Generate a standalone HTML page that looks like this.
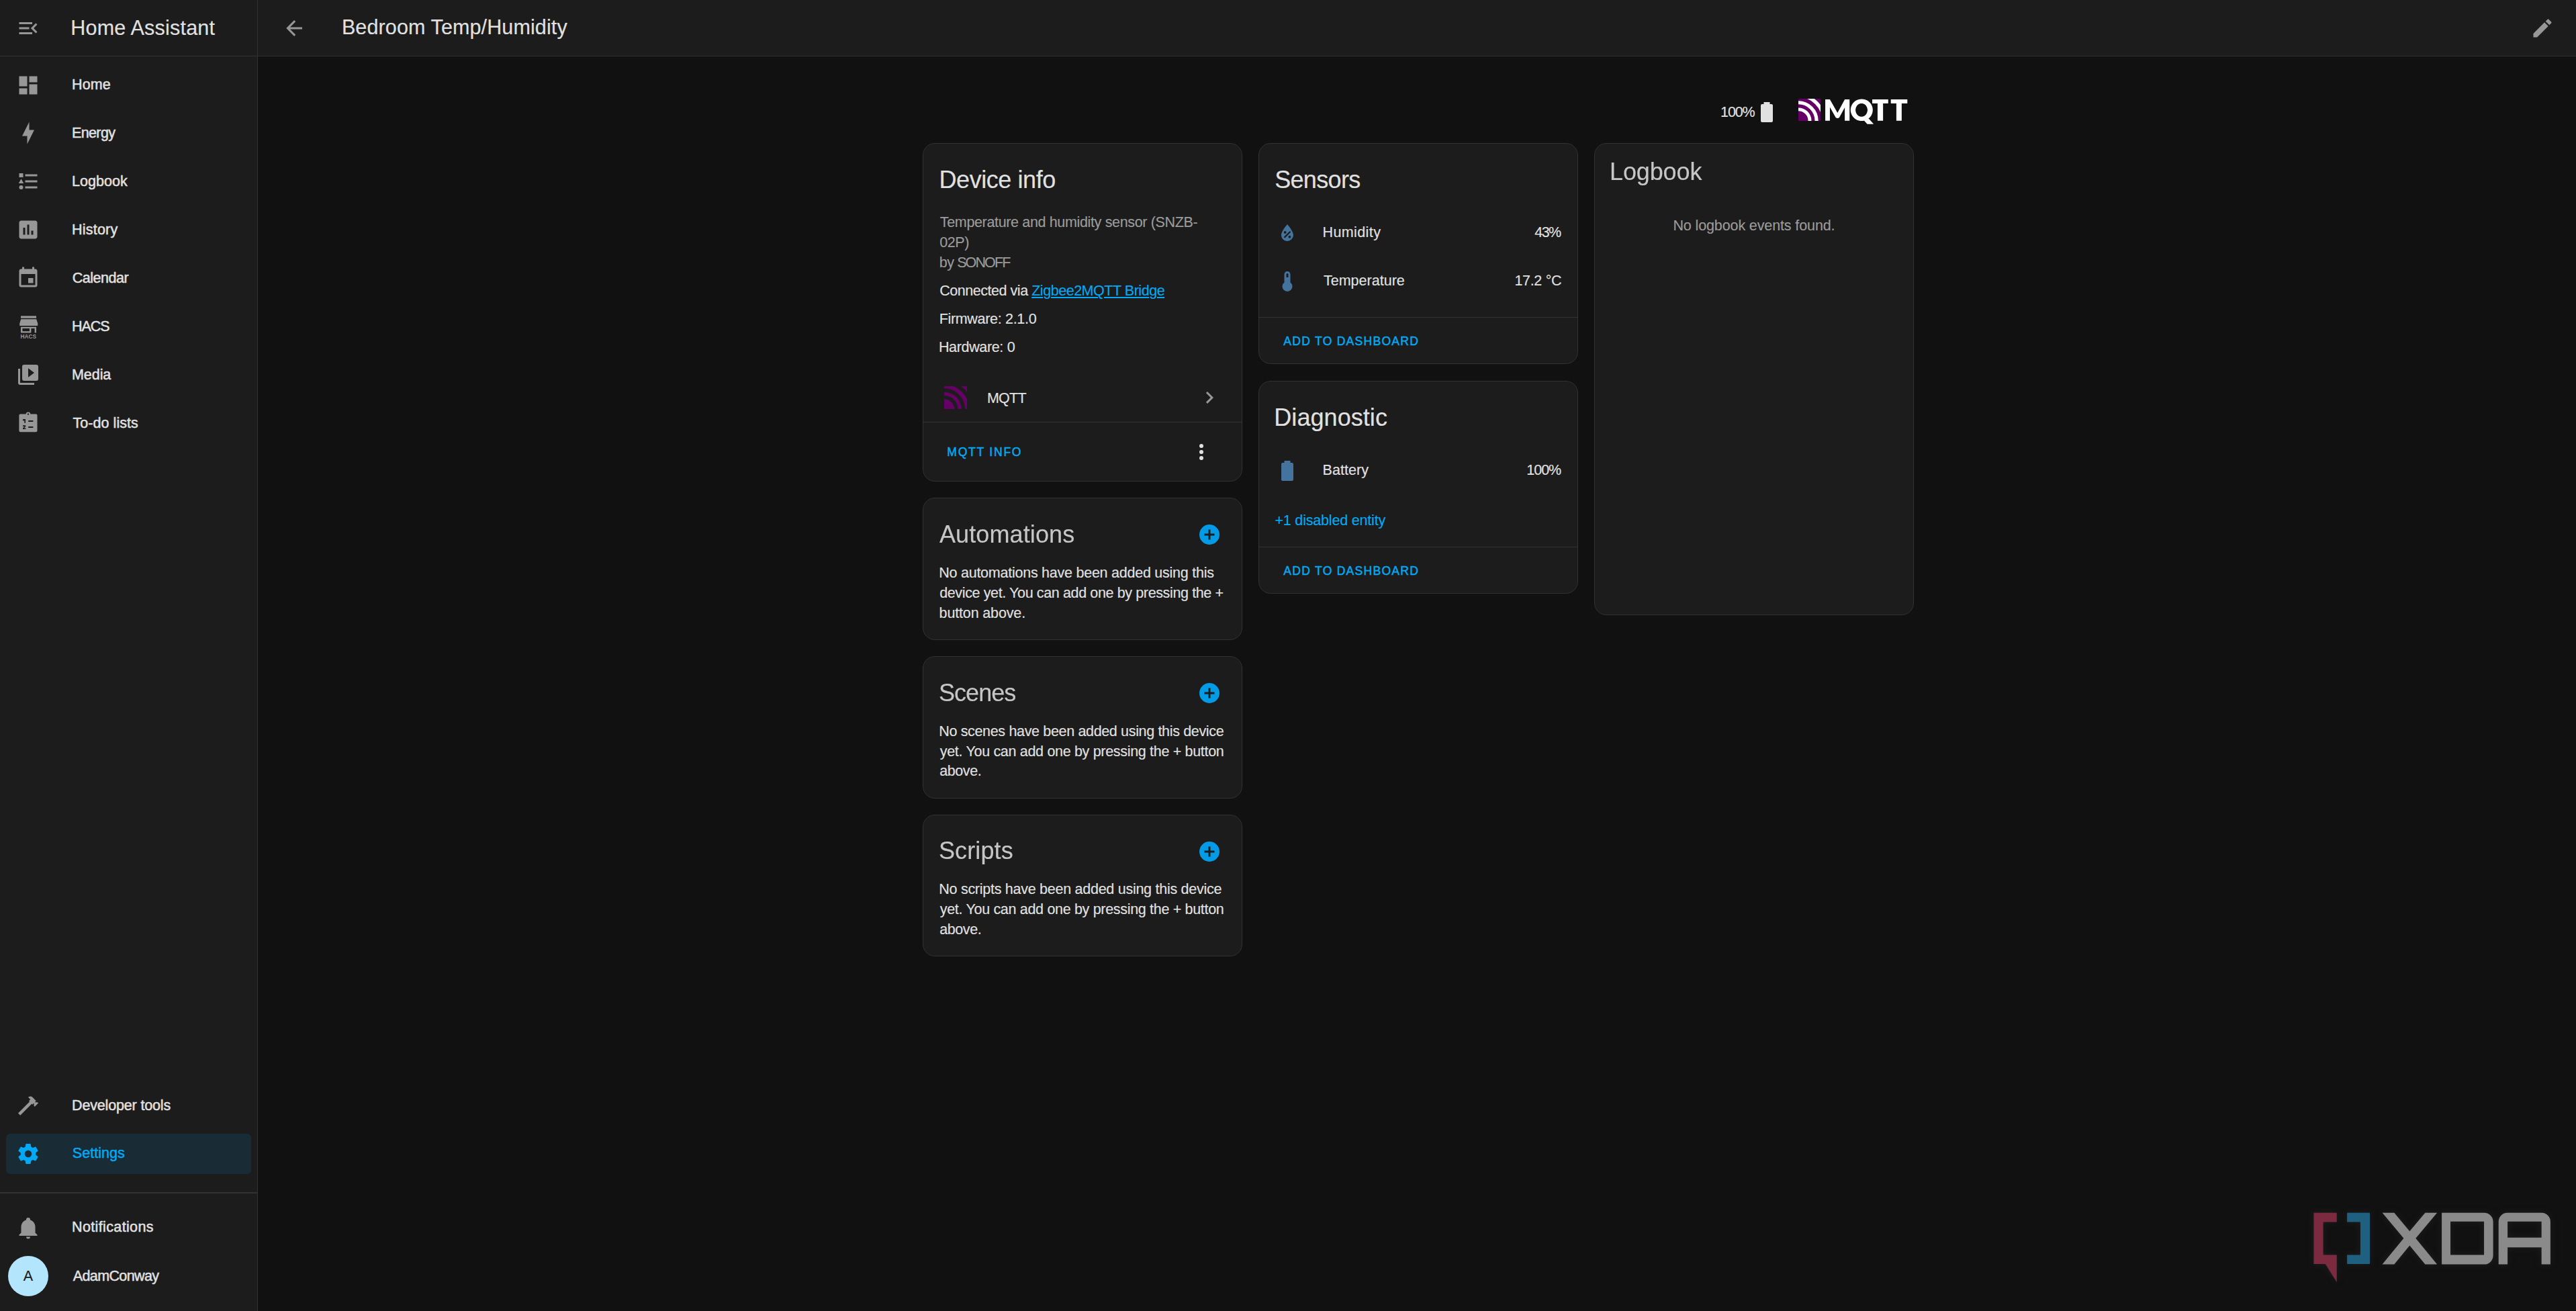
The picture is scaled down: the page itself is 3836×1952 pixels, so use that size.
<!DOCTYPE html>
<html><head><meta charset="utf-8"><style>
html,body{margin:0;padding:0;}
body{width:3836px;height:1952px;background:#111111;position:relative;overflow:hidden;font-family:"Liberation Sans",sans-serif;}
.t{position:absolute;white-space:nowrap;line-height:1;}
.med{-webkit-text-stroke:0.5px currentColor;}
.t{-webkit-text-stroke:0.15px currentColor;}
.t.med{-webkit-text-stroke:0.5px currentColor;}
</style></head><body>
<div style="position:absolute;left:0px;top:0px;width:383px;height:1952px;background:#1c1c1c;"></div>
<div style="position:absolute;left:383px;top:0px;width:1px;height:1952px;background:#323232;"></div>
<div style="position:absolute;left:384px;top:0px;width:3452px;height:83px;background:#1c1c1c;"></div>
<div style="position:absolute;left:0px;top:83px;width:3836px;height:1px;background:#323232;"></div>
<div style="position:absolute;left:0px;top:1775px;width:383px;height:1.5px;background:#323232;"></div>
<svg style="position:absolute;left:23.6px;top:24px" width="36" height="36" viewBox="0 0 24 24"><path fill="#979797" d="M21,15.61L19.59,17L14.58,12L19.59,7L21,8.39L17.44,12L21,15.61M3,6H16V8H3V6M3,13V11H13V13H3M3,18V16H16V18H3Z"/></svg>
<div class="t " style="left:105.25px;top:26.00px;font-size:30.5px;color:#e1e1e1;letter-spacing:0.222px;">Home Assistant</div>
<svg style="position:absolute;left:420px;top:24px" width="36" height="36" viewBox="0 0 24 24"><path fill="#979797" d="M20,11V13H8L13.5,18.5L12.08,19.92L4.16,12L12.08,4.08L13.5,5.5L8,11H20Z"/></svg>
<div class="t " style="left:508.90px;top:25.00px;font-size:30.5px;color:#e1e1e1;letter-spacing:0.122px;">Bedroom Temp/Humidity</div>
<svg style="position:absolute;left:3767.5px;top:24px" width="36" height="36" viewBox="0 0 24 24"><path fill="#979797" d="M20.71,7.04C21.1,6.65 21.1,6 20.71,5.63L18.37,3.29C18,2.9 17.35,2.9 16.96,3.29L15.12,5.12L18.87,8.87M3,17.25V21H6.75L17.81,9.93L14.06,6.18L3,17.25Z"/></svg>
<div class="t med" style="left:107.02px;top:116.00px;font-size:21.5px;color:#e1e1e1;letter-spacing:0.121px;">Home</div>
<svg style="position:absolute;left:24px;top:109px" width="36" height="36" viewBox="0 0 24 24"><path fill="#979797" d="M13,3V9H21V3M13,21H21V11H13M3,21H11V15H3M3,13H11V3H3V13Z"/></svg>
<div class="t med" style="left:107.02px;top:188.00px;font-size:21.5px;color:#e1e1e1;letter-spacing:-0.637px;">Energy</div>
<svg style="position:absolute;left:24px;top:180px" width="36" height="36" viewBox="0 0 24 24"><path fill="#979797" d="M11 15H6L13 1V9H18L11 23V15Z"/></svg>
<div class="t med" style="left:107.02px;top:260.00px;font-size:21.5px;color:#e1e1e1;letter-spacing:0.052px;">Logbook</div>
<svg style="position:absolute;left:24px;top:252px" width="36" height="36" viewBox="0 0 24 24"><path fill="#979797" d="M5,9.5L7.5,14H2.5L5,9.5M3,4H7V8H3V4M5,20A2,2 0 0,0 7,18A2,2 0 0,0 5,16A2,2 0 0,0 3,18A2,2 0 0,0 5,20M9,5V7H21V5H9M9,19H21V17H9V19M9,13H21V11H9V13Z"/></svg>
<div class="t med" style="left:107.02px;top:332.00px;font-size:21.5px;color:#e1e1e1;letter-spacing:0.213px;">History</div>
<svg style="position:absolute;left:24px;top:324px" width="36" height="36" viewBox="0 0 24 24"><path fill="#979797" d="M19 3H5C3.9 3 3 3.9 3 5V19C3 20.1 3.9 21 5 21H19C20.1 21 21 20.1 21 19V5C21 3.9 20.1 3 19 3M9 17H7V10H9V17M13 17H11V7H13V17M17 17H15V13H17V17Z"/></svg>
<div class="t med" style="left:107.70px;top:404.00px;font-size:21.5px;color:#e1e1e1;letter-spacing:-0.481px;">Calendar</div>
<svg style="position:absolute;left:24px;top:396px" width="36" height="36" viewBox="0 0 24 24"><path fill="#979797" d="M19,19H5V8H19M16,1V3H8V1H6V3H5C3.89,3 3,3.89 3,5V19A2,2 0 0,0 5,21H19A2,2 0 0,0 21,19V5C21,3.89 20.1,3 19,3H18V1M17,12H12V17H17V12Z"/></svg>
<div class="t med" style="left:107.02px;top:476.00px;font-size:21.5px;color:#e1e1e1;letter-spacing:-1.024px;">HACS</div>
<div class="t med" style="left:107.02px;top:548.00px;font-size:21.5px;color:#e1e1e1;letter-spacing:-0.065px;">Media</div>
<svg style="position:absolute;left:24px;top:540px" width="36" height="36" viewBox="0 0 24 24"><path fill="#979797" d="M4,6H2V20A2,2 0 0,0 4,22H18V20H4V6M22,4A2,2 0 0,0 20,2H8A2,2 0 0,0 6,4V16A2,2 0 0,0 8,18H20A2,2 0 0,0 22,16V4M12,14.5V5.5L18,10L12,14.5Z"/></svg>
<div class="t med" style="left:108.44px;top:620.00px;font-size:21.5px;color:#e1e1e1;letter-spacing:0.060px;">To-do lists</div>
<svg style="position:absolute;left:24px;top:469px" width="36" height="36" viewBox="0 0 36 36">
<rect x="7" y="1.4" width="23" height="3.3" fill="#979797"/>
<path d="M7.2 6.3H30.2L32.2 12.5V15.9H5.2V12.5Z" fill="#979797"/>
<path d="M7 17.7H30V26.4H27.6V19.9H22.4V26.4H7ZM9.4 19.9V24.2H20V19.9Z" fill="#979797" fill-rule="evenodd"/>
<text x="18.3" y="35.3" font-family="Liberation Sans" font-size="8.3" font-weight="bold" text-anchor="middle" fill="#979797">HACS</text>
</svg>
<svg style="position:absolute;left:24px;top:609px" width="36" height="36" viewBox="0 0 36 36">
<path fill="#979797" d="M4.4 9.5A2 2 0 0 1 6.4 7.5H29.5A2 2 0 0 1 31.5 9.5V32.2A2 2 0 0 1 29.5 34.2H6.4A2 2 0 0 1 4.4 32.2Z"/>
<circle cx="18" cy="7.7" r="3.3" fill="#979797"/>
<circle cx="18" cy="7.6" r="1.2" fill="#1c1c1c"/>
<path fill="#1c1c1c" d="M18.2 16.9H25.4V18.9H18.2Z M18.2 26H25.4V28H18.2Z M10 15.2L12.2 15.1H14V20.8H12.3V17L10 17.6Z M10 24.3H14.2V25.9L11.9 28.4H14.4V30H10V28.5L12.4 25.9H10Z"/>
</svg>
<div style="position:absolute;left:9px;top:1688px;width:365px;height:59.5px;background:#192c36;border-radius:6px;"></div>
<svg style="position:absolute;left:23.8px;top:1628.2px" width="36" height="36" viewBox="0 0 24 24"><path fill="#979797" d="M2 19.63L13.43 8.2L12.72 7.5L14.14 6.07L12 3.89C13.2 2.7 15.09 2.7 16.27 3.89L19.87 7.5L18.45 8.91H21.29L22 9.62L18.45 13.21L17.74 12.5V9.62L16.27 11.04L15.56 10.33L4.13 21.76L2 19.63Z"/></svg>
<div class="t med" style="left:107.02px;top:1636.00px;font-size:21.5px;color:#e1e1e1;letter-spacing:-0.155px;">Developer tools</div>
<svg style="position:absolute;left:23.8px;top:1700.2px" width="36" height="36" viewBox="0 0 24 24"><path fill="#03a9f4" d="M12,15.5A3.5,3.5 0 0,1 8.5,12A3.5,3.5 0 0,1 12,8.5A3.5,3.5 0 0,1 15.5,12A3.5,3.5 0 0,1 12,15.5M19.43,12.97C19.47,12.65 19.5,12.33 19.5,12C19.5,11.67 19.47,11.34 19.43,11L21.54,9.37C21.73,9.22 21.78,8.95 21.66,8.73L19.66,5.27C19.54,5.05 19.27,4.96 19.05,5.05L16.56,6.05C16.04,5.66 15.5,5.32 14.87,5.07L14.5,2.42C14.46,2.18 14.25,2 14,2H10C9.75,2 9.54,2.18 9.5,2.42L9.13,5.07C8.5,5.32 7.96,5.66 7.440,6.05L4.95,5.05C4.73,4.96 4.46,5.05 4.34,5.27L2.34,8.73C2.21,8.95 2.27,9.22 2.46,9.37L4.57,11C4.53,11.34 4.5,11.67 4.5,12C4.5,12.330 4.53,12.65 4.57,12.97L2.46,14.63C2.27,14.78 2.21,15.05 2.34,15.27L4.34,18.73C4.46,18.95 4.73,19.03 4.95,18.95L7.44,17.94C7.96,18.34 8.5,18.68 9.13,18.93L9.5,21.58C9.54,21.82 9.75,22 10,22H14C14.25,22 14.46,21.82 14.5,21.58L14.87,18.93C15.5,18.67 16.04,18.34 16.56,17.94L19.05,18.95C19.27,19.03 19.54,18.95 19.66,18.73L21.66,15.27C21.78,15.05 21.73,14.78 21.54,14.63L19.43,12.97Z"/></svg>
<div class="t med" style="left:107.87px;top:1707.00px;font-size:21.5px;color:#03a9f4;letter-spacing:0.018px;">Settings</div>
<svg style="position:absolute;left:24px;top:1809.9px" width="36" height="36" viewBox="0 0 24 24"><path fill="#979797" d="M21,19V20H3V19L5,17V11C5,7.9 7.03,5.17 10,4.29C10,4.19 10,4.1 10,4A2,2 0 0,1 12,2A2,2 0 0,1 14,4C14,4.1 14,4.19 14,4.29C16.97,5.17 19,7.9 19,11V17L21,19M14,21A2,2 0 0,1 12,23A2,2 0 0,1 10,21"/></svg>
<div class="t med" style="left:107.02px;top:1817.00px;font-size:21.5px;color:#e1e1e1;letter-spacing:0.365px;">Notifications</div>
<div style="position:absolute;left:12px;top:1870px;width:60px;height:60px;border-radius:50%;background:#b3e5fc;"></div>
<div class="t " style="left:-358.00px;width:800px;text-align:center;top:1890.00px;font-size:21.5px;color:#1c1c1c;">A</div>
<div class="t med" style="left:108.70px;top:1890.00px;font-size:21.5px;color:#e1e1e1;letter-spacing:-0.604px;">AdamConway</div>
<div class="t " style="left:2562.12px;top:157.00px;font-size:21.5px;color:#e1e1e1;letter-spacing:-1.147px;">100%</div>
<svg style="position:absolute;left:2612.9px;top:148.7px" width="36" height="36" viewBox="0 0 24 24"><path fill="#e1e1e1" d="M16.67,4H15V2H9V4H7.33A1.33,1.33 0 0,0 6,5.33V20.67C6,21.4 6.6,22 7.33,22H16.67A1.33,1.33 0 0,0 18,20.67V5.33C18,4.6 17.4,4 16.67,4Z"/></svg>
<svg style="position:absolute;left:2678.2px;top:147.1px" width="32.9" height="32.9" viewBox="0 0 100 100">
<rect width="100" height="100" rx="1.5" fill="#660066"/>
<g fill="none" stroke="#ffffff"><circle cx="0" cy="100" r="51.7" stroke-width="15"/><circle cx="0" cy="100" r="82.5" stroke-width="15.5"/><circle cx="0" cy="100" r="115.3" stroke-width="15.6"/></g>
</svg>
<svg style="position:absolute;left:2712px;top:140px" width="136" height="52" viewBox="0 0 2576 985"><g fill="#fff">
<path d="M115 755V150H245L460 530L665 150H800V755H665V380L510 665Q460 700 410 665L245 370V755Z"/>
<path fill-rule="evenodd" d="M1142 140A312 310 0 1 1 1141.9 140Z M1137 265A170 187 0 1 0 1137.1 265Z"/>
<path d="M1205 745L1300 850H1480L1340 690Z"/>
<path d="M1440 150H1890V265H1745V755H1590V265H1440Z"/>
<path d="M1965 150H2430V265H2270V755H2120V265H1965Z"/>
</g></svg>
<div style="position:absolute;left:1374px;top:213px;width:476px;height:503.5px;background:#1c1c1c;border:1.5px solid #323232;border-radius:18px;box-sizing:border-box;"></div>
<div class="t " style="left:1398.50px;top:250.00px;font-size:36px;color:#e1e1e1;letter-spacing:-0.429px;">Device info</div>
<div class="t " style="left:1399.83px;top:321.00px;font-size:21.5px;color:#9b9b9b;letter-spacing:-0.349px;">Temperature and humidity sensor (SNZB-</div>
<div class="t " style="left:1399.14px;top:351.00px;font-size:21.5px;color:#9b9b9b;letter-spacing:-0.343px;">02P)</div>
<div class="t " style="left:1398.76px;top:381.00px;font-size:21.5px;color:#9b9b9b;letter-spacing:-0.445px;">by</div>
<div class="t " style="left:1425.17px;top:381.00px;font-size:21.5px;color:#9b9b9b;letter-spacing:-1.875px;">SONOFF</div>
<div class="t " style="left:1399.29px;top:423.00px;font-size:21.5px;color:#e1e1e1;letter-spacing:-0.466px;">Connected via <span style="color:#03a9f4;text-decoration:underline">Zigbee2MQTT Bridge</span></div>
<div class="t " style="left:1398.64px;top:465.00px;font-size:21.5px;color:#e1e1e1;letter-spacing:-0.309px;">Firmware: 2.1.0</div>
<div class="t " style="left:1397.90px;top:507.00px;font-size:21.5px;color:#e1e1e1;letter-spacing:-0.340px;">Hardware: 0</div>
<svg style="position:absolute;left:1405.7px;top:574.6px" width="34.5" height="34.5" viewBox="0 0 100 100">
<rect width="100" height="100" rx="1.5" fill="#660066"/>
<g fill="none" stroke="#1c1c1c"><circle cx="0" cy="100" r="51.7" stroke-width="15"/><circle cx="0" cy="100" r="82.5" stroke-width="15.5"/><circle cx="0" cy="100" r="115.3" stroke-width="15.6"/></g>
</svg>
<div class="t " style="left:1469.90px;top:583.00px;font-size:21.5px;color:#e1e1e1;letter-spacing:-0.754px;">MQTT</div>
<svg style="position:absolute;left:1782.8px;top:573.6px" width="36" height="36" viewBox="0 0 24 24"><path fill="#979797" d="M8.59,16.58L13.17,12L8.59,7.41L10,6L16,12L10,18L8.59,16.58Z"/></svg>
<div style="position:absolute;left:1374px;top:628px;width:476px;height:1px;background:#323232;"></div>
<div class="t med" style="left:1410.35px;top:665.00px;font-size:17.5px;color:#03a9f4;letter-spacing:1.778px;">MQTT INFO</div>
<svg style="position:absolute;left:1770.9px;top:655px" width="36" height="36" viewBox="0 0 24 24"><path fill="#e1e1e1" d="M12,16A2,2 0 0,1 14,18A2,2 0 0,1 12,20A2,2 0 0,1 10,18A2,2 0 0,1 12,16M12,10A2,2 0 0,1 14,12A2,2 0 0,1 12,14A2,2 0 0,1 10,12A2,2 0 0,1 12,10M12,4A2,2 0 0,1 14,6A2,2 0 0,1 12,8A2,2 0 0,1 10,6A2,2 0 0,1 12,4Z"/></svg>
<div style="position:absolute;left:1374px;top:741.3px;width:476px;height:211.70000000000005px;background:#1c1c1c;border:1.5px solid #323232;border-radius:18px;box-sizing:border-box;"></div>
<div class="t " style="left:1398.71px;top:778.00px;font-size:36px;color:#c6c6c6;letter-spacing:0.105px;will-change:transform;">Automations</div>
<svg style="position:absolute;left:1782.9px;top:778.3px" width="36" height="36" viewBox="0 0 24 24"><path fill="#039be5" d="M17,13H13V17H11V13H7V11H11V7H13V11H17M12,2A10,10 0 0,0 2,12A10,10 0 0,0 12,22A10,10 0 0,0 22,12A10,10 0 0,0 12,2Z"/></svg>
<div class="t " style="left:1398.25px;top:843.00px;font-size:21.5px;color:#e1e1e1;letter-spacing:-0.246px;">No automations have been added using this</div>
<div class="t " style="left:1399.19px;top:873.00px;font-size:21.5px;color:#e1e1e1;letter-spacing:-0.372px;">device yet. You can add one by pressing the +</div>
<div class="t " style="left:1398.58px;top:903.00px;font-size:21.5px;color:#e1e1e1;letter-spacing:-0.145px;">button above.</div>
<div style="position:absolute;left:1374px;top:977.2px;width:476px;height:211.70000000000005px;background:#1c1c1c;border:1.5px solid #323232;border-radius:18px;box-sizing:border-box;"></div>
<div class="t " style="left:1397.65px;top:1014.00px;font-size:36px;color:#c6c6c6;letter-spacing:-0.965px;will-change:transform;">Scenes</div>
<svg style="position:absolute;left:1782.9px;top:1014.2px" width="36" height="36" viewBox="0 0 24 24"><path fill="#039be5" d="M17,13H13V17H11V13H7V11H11V7H13V11H17M12,2A10,10 0 0,0 2,12A10,10 0 0,0 12,22A10,10 0 0,0 22,12A10,10 0 0,0 12,2Z"/></svg>
<div class="t " style="left:1398.25px;top:1079.00px;font-size:21.5px;color:#e1e1e1;letter-spacing:-0.340px;">No scenes have been added using this device</div>
<div class="t " style="left:1399.79px;top:1109.00px;font-size:21.5px;color:#e1e1e1;letter-spacing:-0.316px;">yet. You can add one by pressing the + button</div>
<div class="t " style="left:1399.18px;top:1138.00px;font-size:21.5px;color:#e1e1e1;letter-spacing:-0.416px;">above.</div>
<div style="position:absolute;left:1374px;top:1212.7px;width:476px;height:211.70000000000005px;background:#1c1c1c;border:1.5px solid #323232;border-radius:18px;box-sizing:border-box;"></div>
<div class="t " style="left:1397.65px;top:1249.00px;font-size:36px;color:#c6c6c6;letter-spacing:0.108px;will-change:transform;">Scripts</div>
<svg style="position:absolute;left:1782.9px;top:1249.7px" width="36" height="36" viewBox="0 0 24 24"><path fill="#039be5" d="M17,13H13V17H11V13H7V11H11V7H13V11H17M12,2A10,10 0 0,0 2,12A10,10 0 0,0 12,22A10,10 0 0,0 22,12A10,10 0 0,0 12,2Z"/></svg>
<div class="t " style="left:1398.25px;top:1314.00px;font-size:21.5px;color:#e1e1e1;letter-spacing:-0.268px;">No scripts have been added using this device</div>
<div class="t " style="left:1399.79px;top:1344.00px;font-size:21.5px;color:#e1e1e1;letter-spacing:-0.316px;">yet. You can add one by pressing the + button</div>
<div class="t " style="left:1399.18px;top:1374.00px;font-size:21.5px;color:#e1e1e1;letter-spacing:-0.416px;">above.</div>
<div style="position:absolute;left:1874px;top:213px;width:476px;height:329.4px;background:#1c1c1c;border:1.5px solid #323232;border-radius:18px;box-sizing:border-box;"></div>
<div class="t " style="left:1898.13px;top:250.00px;font-size:36px;color:#e1e1e1;letter-spacing:-0.652px;">Sensors</div>
<svg style="position:absolute;left:1898.8px;top:328.8px" width="36" height="36" viewBox="0 0 24 24"><path fill="#44739e" d="M12,3.25C12,3.25 6,10 6,14C6,17.32 8.69,20 12,20A6,6 0 0,0 18,14C18,10 12,3.25 12,3.25M14.47,9.97L15.53,11.03L9.53,17.03L8.47,15.97M9.75,10A1.25,1.25 0 0,1 11,11.25A1.25,1.25 0 0,1 9.75,12.5A1.25,1.25 0 0,1 8.5,11.25A1.25,1.25 0 0,1 9.75,10M14.25,14.5A1.25,1.25 0 0,1 15.5,15.75A1.25,1.25 0 0,1 14.25,17A1.25,1.25 0 0,1 13,15.75A1.25,1.25 0 0,1 14.25,14.5Z"/></svg>
<div class="t " style="left:1969.56px;top:336.00px;font-size:21.5px;color:#e1e1e1;letter-spacing:0.389px;">Humidity</div>
<div class="t " style="left:2285.26px;top:336.00px;font-size:21.5px;color:#e1e1e1;letter-spacing:-1.548px;">43%</div>
<svg style="position:absolute;left:1898.8px;top:400.7px" width="36" height="36" viewBox="0 0 24 24"><path fill="#44739e" d="M15 13V5A3 3 0 0 0 9 5V13A5 5 0 1 0 15 13M12 4A1 1 0 0 1 13 5V8H11V5A1 1 0 0 1 12 4Z"/></svg>
<div class="t " style="left:1970.94px;top:408.00px;font-size:21.5px;color:#e1e1e1;letter-spacing:0.019px;">Temperature</div>
<div class="t " style="left:2255.38px;top:408.00px;font-size:21.5px;color:#e1e1e1;letter-spacing:-0.313px;">17.2 °C</div>
<div style="position:absolute;left:1874px;top:472px;width:476px;height:1px;background:#323232;"></div>
<div class="t med" style="left:1911.37px;top:500.00px;font-size:17.5px;color:#03a9f4;letter-spacing:1.282px;">ADD TO DASHBOARD</div>
<div style="position:absolute;left:1874px;top:567px;width:476px;height:317.20000000000005px;background:#1c1c1c;border:1.5px solid #323232;border-radius:18px;box-sizing:border-box;"></div>
<div class="t " style="left:1897.29px;top:604.00px;font-size:36px;color:#e1e1e1;letter-spacing:0.060px;">Diagnostic</div>
<svg style="position:absolute;left:1898.8px;top:682.9px" width="36" height="36" viewBox="0 0 24 24"><path fill="#44739e" d="M16.67,4H15V2H9V4H7.33A1.33,1.33 0 0,0 6,5.33V20.67C6,21.4 6.6,22 7.33,22H16.67A1.33,1.33 0 0,0 18,20.67V5.33C18,4.6 17.4,4 16.67,4Z"/></svg>
<div class="t " style="left:1969.56px;top:690.00px;font-size:21.5px;color:#e1e1e1;letter-spacing:0.058px;">Battery</div>
<div class="t " style="left:2273.25px;top:690.00px;font-size:21.5px;color:#e1e1e1;letter-spacing:-1.014px;">100%</div>
<div class="t " style="left:1898.46px;top:765.00px;font-size:21.5px;color:#03a9f4;letter-spacing:-0.189px;">+1 disabled entity</div>
<div style="position:absolute;left:1874px;top:814px;width:476px;height:1px;background:#323232;"></div>
<div class="t med" style="left:1911.37px;top:842.00px;font-size:17.5px;color:#03a9f4;letter-spacing:1.282px;">ADD TO DASHBOARD</div>
<div style="position:absolute;left:2374px;top:213px;width:476px;height:703.2px;background:#1c1c1c;border:1.5px solid #323232;border-radius:18px;box-sizing:border-box;"></div>
<div class="t " style="left:2397.49px;top:238.00px;font-size:36px;color:#c6c6c6;letter-spacing:-0.120px;will-change:transform;">Logbook</div>
<div class="t " style="left:2491.43px;top:326.00px;font-size:21.5px;color:#9b9b9b;letter-spacing:-0.118px;">No logbook events found.</div>
<svg style="position:absolute;left:3420px;top:1780px;filter:drop-shadow(0 0 5px rgba(40,40,40,0.6))" width="416" height="172" viewBox="0 0 2576 1065">
<path fill="#7c2a40" fill-rule="evenodd" d="M158 160H370V800L265 632H158Z M245 245V548H370V245Z"/>
<path fill="#1f5f80" fill-rule="evenodd" d="M465 160H675V632H465V548H588V245H465Z"/>
<path fill="#8a8a8a" d="M790 160H900L1042 330L1185 160H1295L1098 395L1295 635H1185L1042 462L900 635H790L987 395Z"/>
<path fill="#8a8a8a" fill-rule="evenodd" d="M1338 160H1730A82 82 0 0 1 1812 242V553A82 82 0 0 1 1730 635H1338Z M1418 240V548H1728V240Z"/>
<path fill="#8a8a8a" fill-rule="evenodd" d="M1862 240A80 80 0 0 1 1942 160H2260A80 80 0 0 1 2340 240V635H2258V478H1945V635H1862Z M1945 240V388H2258V240Z"/>
</svg>
</body></html>
